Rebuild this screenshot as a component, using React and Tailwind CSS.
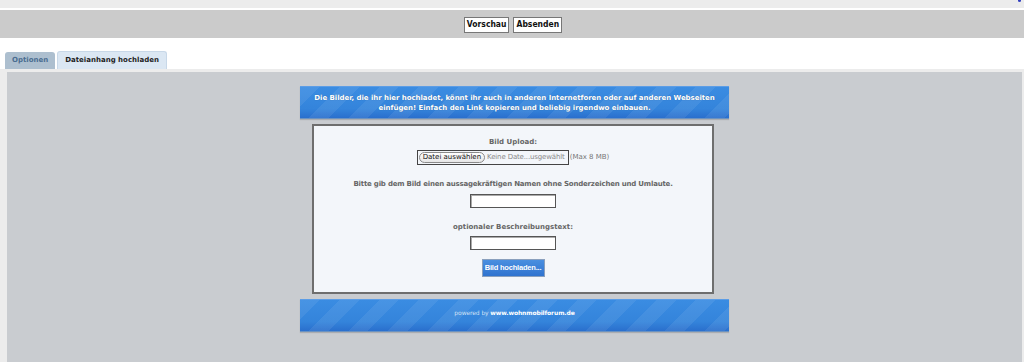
import React from 'react';

const stripes =
  'bg-[repeating-linear-gradient(135deg,rgba(255,255,255,0.07)_0px,rgba(255,255,255,0.07)_14px,rgba(255,255,255,0)_14px,rgba(255,255,255,0)_28px),linear-gradient(180deg,#3a8ce2_0%,#3484db_70%,#2a6fcd_100%)]';

const Banner = ({ children, className = '' }) => (
  <div
    className={`${stripes} w-[429px] ml-[293px] border-t border-[#5c9de6] border-b border-b-[#6a92c2] shadow-[0_1px_1px_rgba(0,0,0,0.15)] ${className}`}
  >
    {children}
  </div>
);

const TextInput = () => (
  <div className="w-[86px] h-[14px] bg-white border border-[#555] shadow-[inset_1px_1px_0_#aaa]" />
);

const App = () => {
  return (
    <div className="w-[1024px] h-[362px] overflow-hidden bg-white font-['DejaVu_Sans',sans-serif]">
      {/* top strip */}
      <div className="h-[8px] bg-[#ececec] relative">
        <span className="absolute right-[3px] top-0 w-[3px] h-[2px] bg-[#3340c0] rounded-b-full" />
      </div>
      <div className="h-[2px] bg-white" />
      <div className="h-[28px] bg-[#cbcbcb] flex justify-center items-center gap-[4px] pt-[1px] pl-[2px]">
        <button className="h-[16px] px-[2px] bg-white border border-[#777] text-[8.5px] font-bold text-[#111] font-['DejaVu_Sans_Condensed','DejaVu_Sans',sans-serif] leading-none">
          Vorschau
        </button>
        <button className="h-[16px] px-[2px] bg-white border border-[#777] text-[8.5px] font-bold text-[#111] font-['DejaVu_Sans_Condensed','DejaVu_Sans',sans-serif] leading-none">
          Absenden
        </button>
      </div>

      {/* tabs */}
      <div className="h-[13px]" />
      <div className="flex items-end gap-[2px] pl-[5px] h-[18px]">
        <div className="h-[17px] px-[7px] flex items-center bg-[#adbfcf] rounded-t-[3px] text-[7px] font-bold text-[#4a6d91]">
          Optionen
        </div>
        <div className="h-[18px] px-[7px] flex items-center bg-[#dbe7f3] border border-b-0 border-[#c8d8e8] rounded-t-[3px] text-[7px] font-bold text-[#1e1e1e]">
          Dateianhang hochladen
        </div>
      </div>

      {/* panel */}
      <div className="h-[294px] bg-[#ececec] pl-[7px] pr-[2px] pt-[3px]">
        <div className="h-full bg-[#c9ccd0] pt-[14px]">
          <Banner className="h-[33px] flex items-center justify-center">
            <p className="text-center text-white font-bold text-[7px] leading-[10px] tracking-[-0.05px] [text-shadow:0_0_1px_rgba(0,0,0,0.3)]">
              Die Bilder, die ihr hier hochladet, könnt ihr auch in anderen Internetforen oder auf anderen Webseiten
              <br />
              einfügen! Einfach den Link kopieren und beliebig irgendwo einbauen.
            </p>
          </Banner>

          <div className="w-[402px] h-[170px] ml-[305px] mt-[5px] bg-[#f3f6fa] border-[2px] border-[#6e6e6e] flex flex-col items-center pt-[11px] text-[#666] text-[7px] font-bold">
            <p className="leading-[10px]">Bild Upload:</p>

            <div className="mt-[3px] flex items-center">
              <div className="w-[152px] h-[15px] border border-[#444] flex items-center pl-[1px] bg-[#f3f6fa] overflow-hidden">
                <div className="shrink-0 whitespace-nowrap h-[11px] px-[3px] flex items-center rounded-full border border-[#8a8a8a] bg-gradient-to-b from-white to-[#e6e6e6] text-[#111] font-normal text-[7px]">
                  Datei auswählen
                </div>
                <span className="ml-[2px] font-normal text-[#8a8a8a] text-[7px] tracking-[-0.15px] whitespace-nowrap">
                  Keine Date...usgewählt
                </span>
              </div>
              <span className="ml-[1px] font-normal text-[#777] text-[7px]">(Max 8 MB)</span>
            </div>

            <p className="mt-[14px] leading-[10px] tracking-[-0.2px]">
              Bitte gib dem Bild einen aussagekräftigen Namen ohne Sonderzeichen und Umlaute.
            </p>
            <div className="mt-[5px]">
              <TextInput />
            </div>

            <p className="mt-[14px] leading-[10px]">optionaler Beschreibungstext:</p>
            <div className="mt-[4px]">
              <TextInput />
            </div>

            <button className="mt-[9px] w-[63px] h-[18px] bg-gradient-to-b from-[#4a8fe0] to-[#2f73cf] border border-[#8aa0bd] text-white font-bold text-[7.5px] font-['Liberation_Sans',sans-serif] tracking-[-0.2px] leading-none">
              Bild hochladen...
            </button>
          </div>

          <Banner className="h-[33px] mt-[5px] flex justify-center pt-[8px]">
            <p className="text-[6px] leading-[10px] tracking-[-0.1px] text-[#cfe0f5]">
              powered by <span className="font-bold text-white">www.wohnmobilforum.de</span>
            </p>
          </Banner>
        </div>
      </div>
    </div>
  );
};

export default App;
